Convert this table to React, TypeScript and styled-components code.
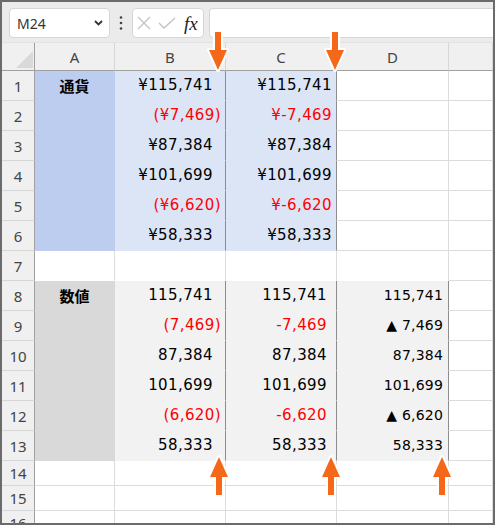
import React from "react";
import styled, { createGlobalStyle } from "styled-components";

const Global = createGlobalStyle`
  html, body { margin: 0; padding: 0; background: #fff; }
  body { font-family: "DejaVu Sans", "Noto Sans CJK JP", sans-serif; }
`;

const Frame = styled.div`
  position: relative;
  width: 495px;
  height: 525px;
  box-sizing: border-box;
  border: 2px solid #6b6b6b;
  background: #fff;
  overflow: hidden;
  display: flex;
  flex-direction: column;
`;

const Toolbar = styled.div`
  flex: none;
  height: 41px;
  box-sizing: border-box;
  background: #ebebeb;
  border-bottom: 1px solid #e2e2e2;
  display: flex;
  align-items: flex-start;
  padding: 6px 0 0 7px;
`;

const NameBox = styled.div`
  width: 101px;
  height: 30px;
  box-sizing: border-box;
  background: #fff;
  border: 1px solid #d6d6d6;
  border-radius: 4px;
  display: flex;
  align-items: center;
  justify-content: space-between;
  padding: 0 6px 0 7px;
  font-family: "Noto Sans", sans-serif;
  font-size: 14px;
  color: #333;
`;

const Dots = styled.div`
  width: 22px;
  height: 30px;
  display: flex;
  align-items: center;
  justify-content: center;
`;

const FxBox = styled.div`
  width: 72px;
  height: 30px;
  box-sizing: border-box;
  background: #fff;
  border: 1px solid #d6d6d6;
  border-radius: 4px;
  display: flex;
  align-items: center;
  padding-left: 4px;
  gap: 7px;
`;

const Fx = styled.span`
  font-family: "Liberation Serif", serif;
  font-style: italic;
  font-size: 19px;
  color: #222;
  margin-left: 1px;
  line-height: 1;
`;

const FormulaInput = styled.div`
  flex: 1;
  height: 30px;
  margin-left: 5px;
  box-sizing: border-box;
  background: #fff;
  border: 1px solid #d6d6d6;
  border-right: none;
  border-radius: 4px 0 0 4px;
`;

const Sheet = styled.div`
  flex: 1;
  display: grid;
  grid-template-columns: 33px 80px 111px 111px 112px 1fr;
  grid-template-rows: 28px repeat(13, 30px) repeat(3, 25px);
  overflow: hidden;
`;

const Corner = styled.div`
  box-sizing: border-box;
  background: #f0f0f0;
  border-right: 1px solid #a0a0a0;
  border-bottom: 1px solid #a0a0a0;
  display: flex;
  align-items: flex-end;
  justify-content: flex-end;
  padding: 0 1px 2px 0;
`;

const CornerMark = styled.div`
  width: 17px;
  height: 17px;
  background: #d9d9d9;
  clip-path: polygon(100% 0, 100% 100%, 0 100%);
`;

const ColHead = styled.div`
  box-sizing: border-box;
  background: #f0f0f0;
  border-right: 1px solid #d6d6d6;
  border-bottom: 1px solid #a0a0a0;
  display: flex;
  align-items: center;
  justify-content: center;
  font-family: "Noto Sans", sans-serif;
  font-size: 15px;
  color: #444;
`;

const RowHead = styled.div`
  box-sizing: border-box;
  background: #f0f0f0;
  border-right: 1px solid #a0a0a0;
  border-bottom: 1px solid #d6d6d6;
  display: flex;
  align-items: center;
  justify-content: center;
  font-family: "Noto Sans", sans-serif;
  font-size: 15px;
  color: #444;
`;

type CellProps = {
  $fill?: string;
  $edge?: boolean;
  $red?: boolean;
  $pad?: number;
  $small?: boolean;
  $center?: boolean;
  $bold?: boolean;
  $openBottom?: boolean;
};

const GRID = "#dcdcdc";

const Cell = styled.div<CellProps>`
  box-sizing: border-box;
  background: ${(p) => p.$fill ?? "#fff"};
  border-right: 1px solid
    ${(p) => (p.$edge ? "#8c8c8c" : p.$fill ? p.$fill : GRID)};
  border-bottom: 1px solid
    ${(p) => (p.$openBottom ? "#fff" : p.$fill ? p.$fill : GRID)};
  display: flex;
  align-items: center;
  justify-content: ${(p) => (p.$center ? "center" : "flex-end")};
  padding-right: ${(p) => (p.$center ? 0 : p.$pad ?? 4)}px;
  padding-bottom: 1px;
  color: ${(p) => (p.$red ? "#ff0000" : "#000")};
  font-family: ${(p) =>
    p.$bold ? `"Noto Sans CJK JP", sans-serif` : `"DejaVu Sans", "Noto Sans CJK JP", sans-serif`};
  font-weight: ${(p) => (p.$bold ? 700 : 400)};
  font-size: ${(p) => (p.$small ? 14 : 15)}px;
  letter-spacing: ${(p) => (p.$bold ? 0 : p.$small ? 0.2 : 0.4)}px;
  white-space: nowrap;
`;

const ArrowSvg = styled.svg<{ $x: number; $y: number }>`
  position: absolute;
  left: ${(p) => p.$x}px;
  top: ${(p) => p.$y}px;
  overflow: visible;
`;

const ORANGE = "#f5681a";

const Arrow = ({ x, y, up }: { x: number; y: number; up?: boolean }) => (
  <ArrowSvg $x={x} $y={y} width={22} height={42} viewBox="0 0 22 42">
    <polygon
      points={
        up
          ? "11,2 20,22 14,22 14,40 8,40 8,22 2,22"
          : "8,2 14,2 14,20 20,20 11,40 2,20 8,20"
      }
      fill={ORANGE}
      stroke="#fff"
      strokeWidth={4}
      strokeLinejoin="round"
      paintOrder="stroke"
    />
  </ArrowSvg>
);

const BLUE_A = "#bdcdef";
const BLUE_B = "#dce5f6";
const GRAY_A = "#d9d9d9";
const GRAY_B = "#f2f2f2";

type V = { t: string; neg?: boolean };

const currB: V[] = [
  { t: "¥115,741" },
  { t: "(¥7,469)", neg: true },
  { t: "¥87,384" },
  { t: "¥101,699" },
  { t: "(¥6,620)", neg: true },
  { t: "¥58,333" },
];
const currC: V[] = [
  { t: "¥115,741" },
  { t: "¥-7,469", neg: true },
  { t: "¥87,384" },
  { t: "¥101,699" },
  { t: "¥-6,620", neg: true },
  { t: "¥58,333" },
];
const numB: V[] = [
  { t: "115,741" },
  { t: "(7,469)", neg: true },
  { t: "87,384" },
  { t: "101,699" },
  { t: "(6,620)", neg: true },
  { t: "58,333" },
];
const numC: V[] = [
  { t: "115,741" },
  { t: "-7,469", neg: true },
  { t: "87,384" },
  { t: "101,699" },
  { t: "-6,620", neg: true },
  { t: "58,333" },
];
const numD = ["115,741", "▲ 7,469", "87,384", "101,699", "▲ 6,620", "58,333"];

export default function App() {
  const rows: React.ReactNode[] = [];

  for (let r = 1; r <= 16; r++) {
    rows.push(<RowHead key={`h${r}`}>{r}</RowHead>);
    if (r <= 6) {
      const i = r - 1;
      rows.push(
        <Cell key={`a${r}`} $fill={BLUE_A} $center $bold>
          {r === 1 ? "通貨" : ""}
        </Cell>,
        <Cell key={`b${r}`} $fill={BLUE_B} $edge $red={currB[i].neg} $pad={currB[i].neg ? 4 : 12}>
          {currB[i].t}
        </Cell>,
        <Cell key={`c${r}`} $fill={BLUE_B} $edge $red={currC[i].neg} $pad={4}>
          {currC[i].t}
        </Cell>,
        <Cell key={`d${r}`} />,
        <Cell key={`e${r}`} />
      );
    } else if (r === 7) {
      rows.push(
        <Cell key="a7" $openBottom />,
        <Cell key="b7" $openBottom />,
        <Cell key="c7" $openBottom />,
        <Cell key="d7" $openBottom />,
        <Cell key="e7" />
      );
    } else if (r <= 13) {
      const i = r - 8;
      rows.push(
        <Cell key={`a${r}`} $fill={GRAY_A} $center $bold>
          {r === 8 ? "数値" : ""}
        </Cell>,
        <Cell key={`b${r}`} $fill={GRAY_B} $edge $red={numB[i].neg} $pad={numB[i].neg ? 4 : 12}>
          {numB[i].t}
        </Cell>,
        <Cell key={`c${r}`} $fill={GRAY_B} $edge $red={numC[i].neg} $pad={9}>
          {numC[i].t}
        </Cell>,
        <Cell key={`d${r}`} $fill={GRAY_B} $edge $small $pad={5}>
          {numD[i]}
        </Cell>,
        <Cell key={`e${r}`} />
      );
    } else {
      rows.push(
        <Cell key={`a${r}`} />,
        <Cell key={`b${r}`} />,
        <Cell key={`c${r}`} />,
        <Cell key={`d${r}`} />,
        <Cell key={`e${r}`} />
      );
    }
  }

  return (
    <>
      <Global />
      <Frame>
        <Toolbar>
          <NameBox>
            <span>M24</span>
            <svg width="9" height="6" viewBox="0 0 9 6">
              <polyline points="1,1 4.5,4.5 8,1" fill="none" stroke="#333" strokeWidth="1.8" />
            </svg>
          </NameBox>
          <Dots>
            <svg width="4" height="14" viewBox="0 0 4 14">
              <circle cx="2" cy="1.5" r="1.3" fill="#444" />
              <circle cx="2" cy="7" r="1.3" fill="#444" />
              <circle cx="2" cy="12.5" r="1.3" fill="#444" />
            </svg>
          </Dots>
          <FxBox>
            <svg width="14" height="14" viewBox="0 0 14 14">
              <path d="M1 1 L13 13 M13 1 L1 13" stroke="#c2c2c2" strokeWidth="1.3" fill="none" />
            </svg>
            <svg width="18" height="12" viewBox="0 0 18 12">
              <polyline points="1,6 6,11 17,1" stroke="#c2c2c2" strokeWidth="1.3" fill="none" />
            </svg>
            <Fx>fx</Fx>
          </FxBox>
          <FormulaInput />
        </Toolbar>
        <Sheet>
          <Corner>
            <CornerMark />
          </Corner>
          {["A", "B", "C", "D", ""].map((c, i) => (
            <ColHead key={i}>{c}</ColHead>
          ))}
          {rows}
        </Sheet>
        <Arrow x={205} y={28} />
        <Arrow x={322} y={28} />
        <Arrow x={206} y={453} up />
        <Arrow x={318} y={453} up />
        <Arrow x={429} y={453} up />
      </Frame>
    </>
  );
}
